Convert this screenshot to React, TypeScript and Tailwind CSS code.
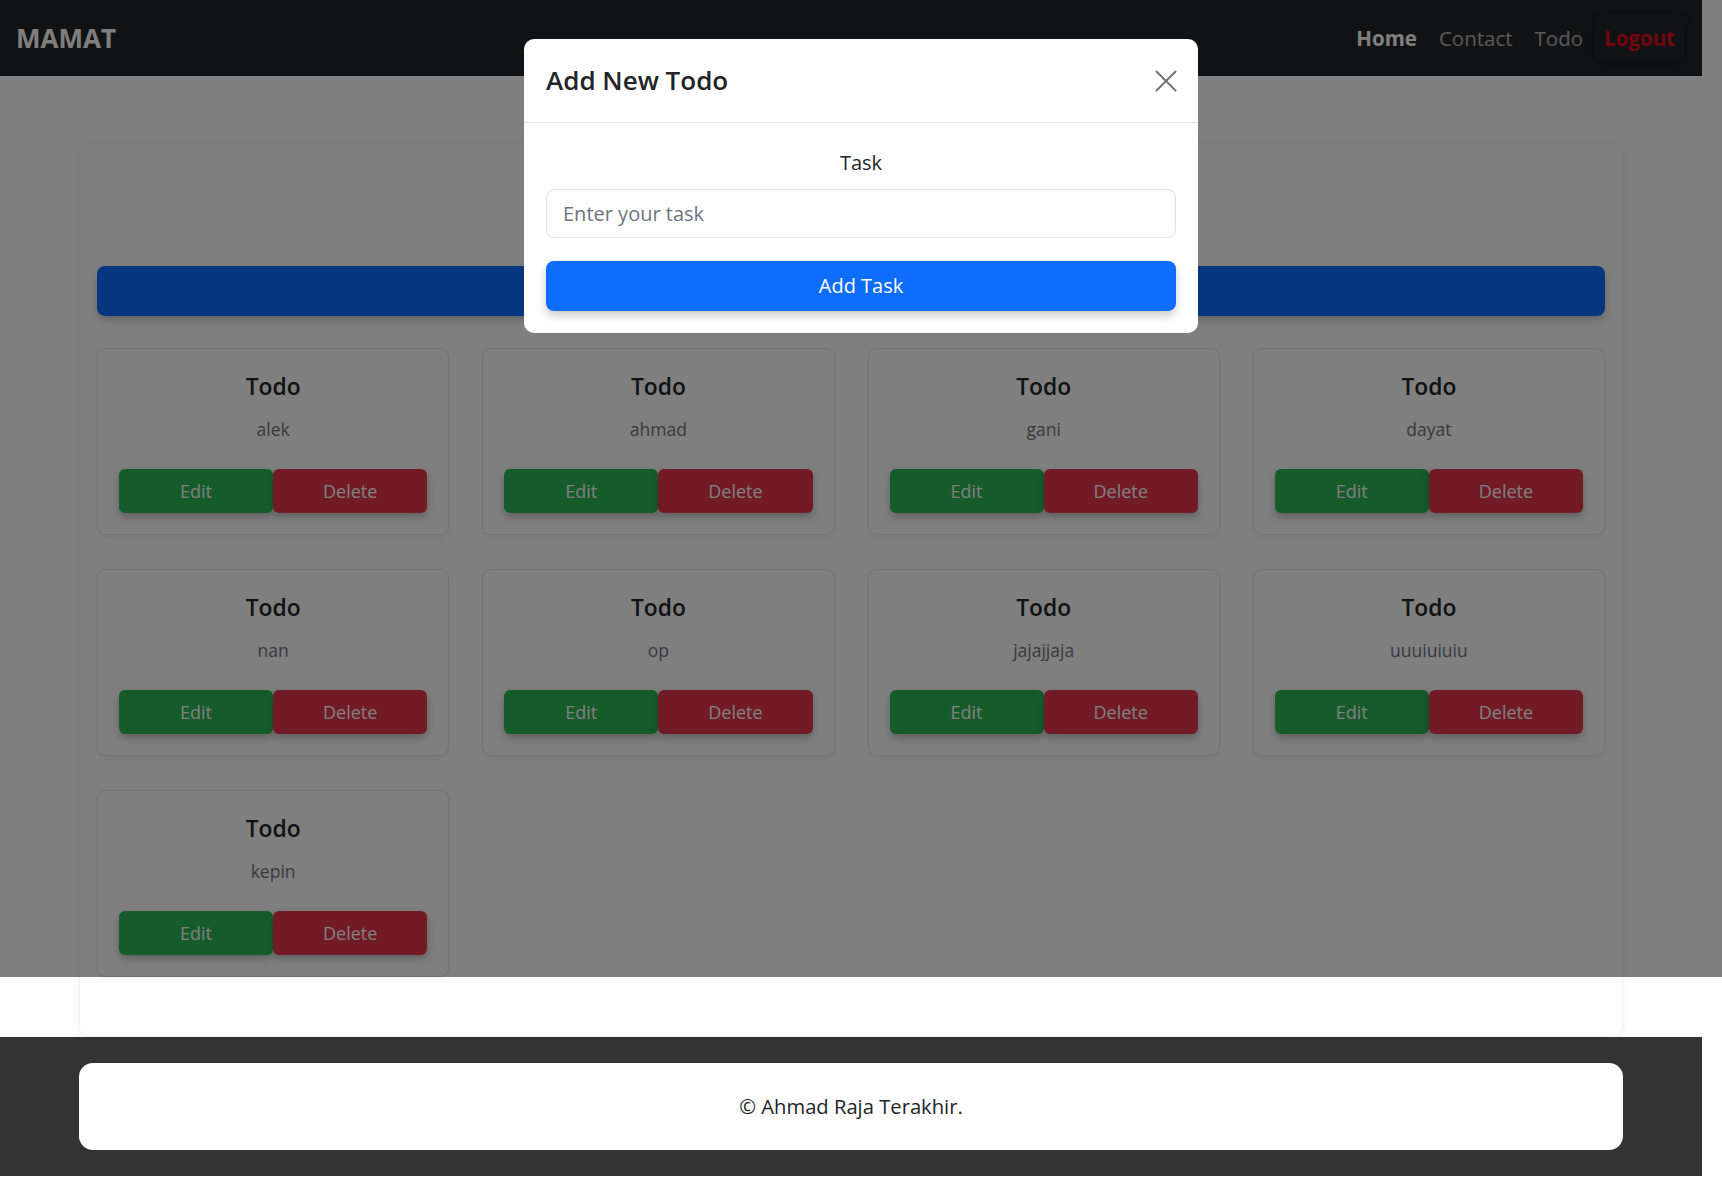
type Todo = { id: number; task: string };

const todos: Todo[] = [
  { id: 1, task: 'alek' },
  { id: 2, task: 'ahmad' },
  { id: 3, task: 'gani' },
  { id: 4, task: 'dayat' },
  { id: 5, task: 'nan' },
  { id: 6, task: 'op' },
  { id: 7, task: 'jajajjaja' },
  { id: 8, task: 'uuuiuiuiu' },
  { id: 9, task: 'kepin' },
];

function Navbar() {
  return (
    <nav className="flex h-[76px] items-center justify-between bg-[#212529] pl-[16px] pr-[17px]">
      <span className="text-[26px] font-bold text-white">MAMAT</span>
      <div className="flex items-center text-[20.5px]">
        <a className="px-[11px] font-bold text-white">Home</a>
        <a className="px-[11px] text-white/65">Contact</a>
        <a className="px-[11px] text-white/65">Todo</a>
        <a className="rounded-[6px] px-[10px] py-[8px] font-bold text-[#e80a1a] shadow-[0_4px_12px_rgba(0,0,0,0.35)]">
          Logout
        </a>
      </div>
    </nav>
  );
}

function TodoCard({ todo }: { todo: Todo }) {
  return (
    <div className="rounded-[9px] border border-black/10 bg-white px-[21px] pb-[21px] pt-[24px] text-center shadow-[0_2px_6px_rgba(0,0,0,0.06)]">
      <h5 className="mb-[15px] text-[22.8px] font-semibold leading-[28px] text-[#212529]">Todo</h5>
      <p className="mb-[27px] text-[17.5px] leading-[26px] text-[#6c757d]">{todo.task}</p>
      <div className="flex">
        <button className="h-[44px] w-1/2 rounded-[6px] bg-[#2bb855] text-[18px] text-white shadow-[0_4px_8px_rgba(0,0,0,0.25)]">
          Edit
        </button>
        <button className="h-[44px] w-1/2 rounded-[6px] bg-[#e6374a] text-[18px] text-white shadow-[0_4px_8px_rgba(0,0,0,0.25)]">
          Delete
        </button>
      </div>
    </div>
  );
}

function CloseIcon() {
  return (
    <svg width="22" height="22" viewBox="0 0 22 22" fill="none" stroke="#6c757d" strokeWidth="2" strokeLinecap="round">
      <line x1="1.5" y1="1.5" x2="20.5" y2="20.5" />
      <line x1="20.5" y1="1.5" x2="1.5" y2="20.5" />
    </svg>
  );
}

function AddTodoModal() {
  return (
    <div className="absolute left-[524px] top-[39px] w-[674px] rounded-[10px] bg-white">
      {/* Header */}
      <div className="flex items-center justify-between border-b border-[#dee2e6] py-[22px] pl-[22px] pr-[21px]">
        <h5 className="text-[26px] font-semibold leading-[39px] text-[#212529]">Add New Todo</h5>
        <CloseIcon />
      </div>

      {/* Body */}
      <div className="px-[22px] pb-[22px] pt-[25px]">
        <label className="mb-[11px] block text-center text-[20px] leading-[30px] text-[#212529]">Task</label>
        <input
          className="h-[49px] w-full rounded-[8px] border border-[#dee2e6] px-[16px] text-[20px] text-[#212529] shadow-[inset_0_1px_2px_rgba(0,0,0,0.05)] outline-none placeholder:text-[#6c757d]"
          placeholder="Enter your task"
        />
        <button className="mt-[23px] block h-[50px] w-full rounded-[8px] bg-[#0d6efd] text-[20px] text-white shadow-[0_5px_10px_rgba(0,0,0,0.2)]">
          Add Task
        </button>
      </div>
    </div>
  );
}

export default function App() {
  return (
    <div className="relative w-[1722px] bg-white font-['Open_Sans',sans-serif] text-[#212529]">
      <div className="w-[1702px]">
        <Navbar />

        {/* Main Content */}
        <main className="mx-auto mt-[66px] w-[1544px] rounded-[12px] border border-black/5 px-[17px] pb-[59px] pt-[123px] shadow-[0_2px_8px_rgba(0,0,0,0.06)]">
          {/* Add todo bar, its label sits behind the modal */}
          <button aria-label="Add Todo" className="block h-[50px] w-full rounded-[8px] bg-[#0d6efd] shadow-[0_4px_8px_rgba(0,0,0,0.2)]" />
          <div className="mt-[32px] grid grid-cols-4 gap-x-[33px] gap-y-[34px]">
            {todos.map((todo) => (
              <TodoCard key={todo.id} todo={todo} />
            ))}
          </div>
        </main>

        {/* Footer */}
        <footer className="bg-[#333333] py-[26px]">
          <div className="mx-auto flex h-[87px] w-[1544px] items-center justify-center rounded-[14px] bg-white text-[20.2px] text-[#212529]">
            © Ahmad Raja Terakhir.
          </div>
        </footer>
      </div>

      {/* Backdrop */}
      <div className="absolute left-0 top-0 h-[977px] w-[1722px] bg-black/50" />

      <AddTodoModal />
    </div>
  );
}
